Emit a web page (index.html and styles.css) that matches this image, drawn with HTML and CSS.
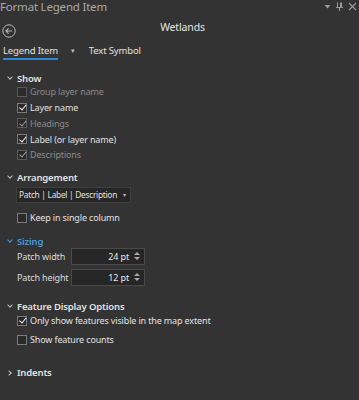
FILE: index.html
```html
<!DOCTYPE html>
<html lang="en">
<head>
    <meta charset="UTF-8">
    <meta name="viewport" content="width=device-width, initial-scale=1.0">
    <title>Format Legend Item</title>
    <link rel="stylesheet" href="styles.css">
</head>
<body>

<div class="pane">
    <!-- Title bar -->
    <div class="titlebar">
        <span class="title">Format Legend Item</span>
        <div class="win-icons">
            <svg width="7" height="5" viewBox="0 0 7 5"><path d="M0.5 1 L6.5 1 L3.5 4.5 Z" fill="#9a9a9a"/></svg>
            <svg width="7" height="9" viewBox="0 0 7 9"><path d="M1.5 0.5 V5.5 M5.5 0.5 V5.5 M0 5.5 H7 M3.5 5.5 V9" stroke="#9a9a9a" stroke-width="1" fill="none"/><path d="M4.5 0.5 V5" stroke="#9a9a9a" stroke-width="1"/></svg>
            <svg width="9" height="9" viewBox="0 0 9 9"><path d="M1 1 L8 8 M8 1 L1 8" stroke="#9a9a9a" stroke-width="1.1"/></svg>
        </div>
    </div>

    <div class="nav">
        <svg class="back" width="14" height="14" viewBox="0 0 14 14">
            <circle cx="7" cy="7" r="6.2" fill="none" stroke="#b8b8b8" stroke-width="1"/>
            <path d="M10 7 H4 M6.6 4.3 L3.9 7 L6.6 9.7" fill="none" stroke="#b8b8b8" stroke-width="1.1"/>
        </svg>
        <span class="layer-title">Wetlands</span>
    </div>

    <div class="tabs">
        <span class="tab active">Legend Item</span>
        <span class="tab-caret">&#9662;</span>
        <span class="tab">Text Symbol</span>
    </div>

    <!-- Show -->
    <div class="section show">
        <div class="section-head"><span class="chev down"></span>Show</div>
        <div class="check-row disabled"><span class="box"></span>Group layer name</div>
        <div class="check-row"><span class="box checked"></span>Layer name</div>
        <div class="check-row disabled"><span class="box checked"></span>Headings</div>
        <div class="check-row"><span class="box checked"></span>Label (or layer name)</div>
        <div class="check-row disabled"><span class="box checked"></span>Descriptions</div>
    </div>

    <!-- Arrangement -->
    <div class="section arrangement">
        <div class="section-head"><span class="chev down"></span>Arrangement</div>
        <div class="select"><span>Patch | Label | Description</span><span class="caret">&#9662;</span></div>
        <div class="check-row spaced"><span class="box"></span>Keep in single column</div>
    </div>

    <!-- Sizing -->
    <div class="section sizing">
        <div class="section-head active"><span class="chev down"></span>Sizing</div>
        <div class="field-row">
            <span class="field-label">Patch width</span>
            <div class="spin"><span class="value">24 pt</span><span class="arrows"><i class="up"></i><i class="dn"></i></span></div>
        </div>
        <div class="field-row">
            <span class="field-label">Patch height</span>
            <div class="spin"><span class="value">12 pt</span><span class="arrows"><i class="up"></i><i class="dn"></i></span></div>
        </div>
    </div>

    <!-- Feature display -->
    <div class="section features">
        <div class="section-head"><span class="chev down"></span>Feature Display Options</div>
        <div class="check-row"><span class="box checked"></span>Only show features visible in the map extent</div>
        <div class="check-row counts"><span class="box"></span>Show feature counts</div>
    </div>

    <div class="section indents">
        <div class="section-head"><span class="chev right"></span>Indents</div>
    </div>
</div>

</body>
</html>
```

FILE: styles.css
```css
/* General styling */
body {
    margin: 0;
    background-color: #333333;
    font-family: "Noto Sans", "Open Sans", sans-serif;
    font-size: 9px;
    letter-spacing: -0.15px;
    color: #dcdcdc;
}

.pane {
    width: 359px;
    height: 400px;
    overflow: hidden;
}

/* Title bar */
.titlebar {
    display: flex;
    justify-content: space-between;
    height: 16px;
}

.title {
    font-size: 11.5px;
    line-height: 14px;
    letter-spacing: -0.2px;
    color: #a8a8a8;
}

.win-icons {
    display: flex;
    align-items: center;
    gap: 5px;
    height: 12px;
    padding-right: 2px;
}

.nav {
    position: relative;
    height: 26px;
}

.back {
    position: absolute;
    left: 2px;
    top: 8px;
}

.layer-title {
    display: block;
    text-align: center;
    font-size: 10.5px;
    line-height: 16px;
    padding-top: 3px;
    padding-left: 6px;
    color: #e4e4e4;
}

/* Tabs */
.tabs {
    display: flex;
    align-items: flex-end;
    height: 18px;
    padding-left: 3px;
}

.tab {
    font-size: 9.5px;
    line-height: 15px;
    color: #e0e0e0;
    border-bottom: 2px solid transparent;
}

.tab.active {
    border-bottom-color: #2f86d8;
}

.tab-caret {
    font-size: 7px;
    line-height: 15px;
    color: #bdbdbd;
    margin: 0 14px 2px 13px;
}

/* Sections */
.section {
    padding-left: 5px;
}

.section-head {
    display: flex;
    align-items: center;
    height: 12px;
    font-size: 9.5px;
    font-weight: 600;
    color: #e2e2e2;
}

.section-head.active {
    color: #3f9be6;
}

.chev {
    width: 3px;
    height: 3px;
    border-right: 1px solid #bdbdbd;
    border-bottom: 1px solid #bdbdbd;
}

.chev.down {
    transform: rotate(45deg);
    margin: -3px 5px 0 3px;
}

.chev.right {
    transform: rotate(-45deg);
    margin: 0 6px 0 2px;
}

.section-head.active .chev {
    border-color: #3f9be6;
}

.check-row {
    display: flex;
    align-items: center;
    height: 15.75px;
    padding-left: 12px;
    color: #e0e0e0;
    white-space: nowrap;
}

.check-row.disabled {
    color: #8a8a8a;
}

.box {
    flex: none;
    width: 8px;
    height: 8px;
    border: 1px solid #7a7a7a;
    background: #2a2a2a;
    margin-right: 3px;
    position: relative;
}

.box.checked::after {
    content: "";
    position: absolute;
    left: 2.5px;
    top: -0.5px;
    width: 2.5px;
    height: 5.5px;
    border-right: 1.5px solid #f0f0f0;
    border-bottom: 1.5px solid #f0f0f0;
    transform: rotate(40deg);
}

.disabled .box {
    border-color: #5a5a5a;
}

.disabled .box.checked::after {
    border-color: #9a9a9a;
}

/* Section spacing */
.show .section-head {
    margin-top: 12px;
}

.arrangement .section-head {
    margin-top: 9px;
}

.sizing .section-head {
    margin-top: 10px;
}

.features .section-head {
    margin-top: 15px;
}

.indents .section-head {
    margin-top: 19px;
}

/* Dropdown */
.select {
    display: flex;
    align-items: center;
    box-sizing: border-box;
    width: 115px;
    height: 16px;
    margin: 3px 0 0 11px;
    padding: 0 4px 0 2px;
    background: #262626;
    border: 1px solid #3e3e3e;
    color: #e0e0e0;
    white-space: nowrap;
    font-size: 8.4px;
    letter-spacing: -0.3px;
}

.caret {
    font-size: 6px;
    color: #bbb;
    margin-left: auto;
}

.check-row.spaced {
    margin-top: 7px;
    height: 16px;
}

.check-row.counts {
    margin-top: 3px;
    height: 16px;
}

/* Sizing fields */
.field-row {
    display: flex;
    align-items: center;
    padding-left: 12px;
    margin-top: 4px;
}

.sizing .section-head + .field-row {
    margin-top: 0;
}

.field-label {
    width: 54px;
    white-space: nowrap;
}

.spin {
    display: flex;
    align-items: center;
    justify-content: flex-end;
    box-sizing: border-box;
    width: 74px;
    height: 17px;
    background: #262626;
    border: 1px solid #4a4a4a;
}

.value {
    color: #e6e6e6;
}

.arrows {
    display: flex;
    flex-direction: column;
    gap: 2px;
    margin: 0 4px 0 5px;
}

.arrows i {
    width: 0;
    height: 0;
    border-left: 3px solid transparent;
    border-right: 3px solid transparent;
}

.arrows .up {
    border-bottom: 3px solid #aaa;
}

.arrows .dn {
    border-top: 3px solid #aaa;
}
```
